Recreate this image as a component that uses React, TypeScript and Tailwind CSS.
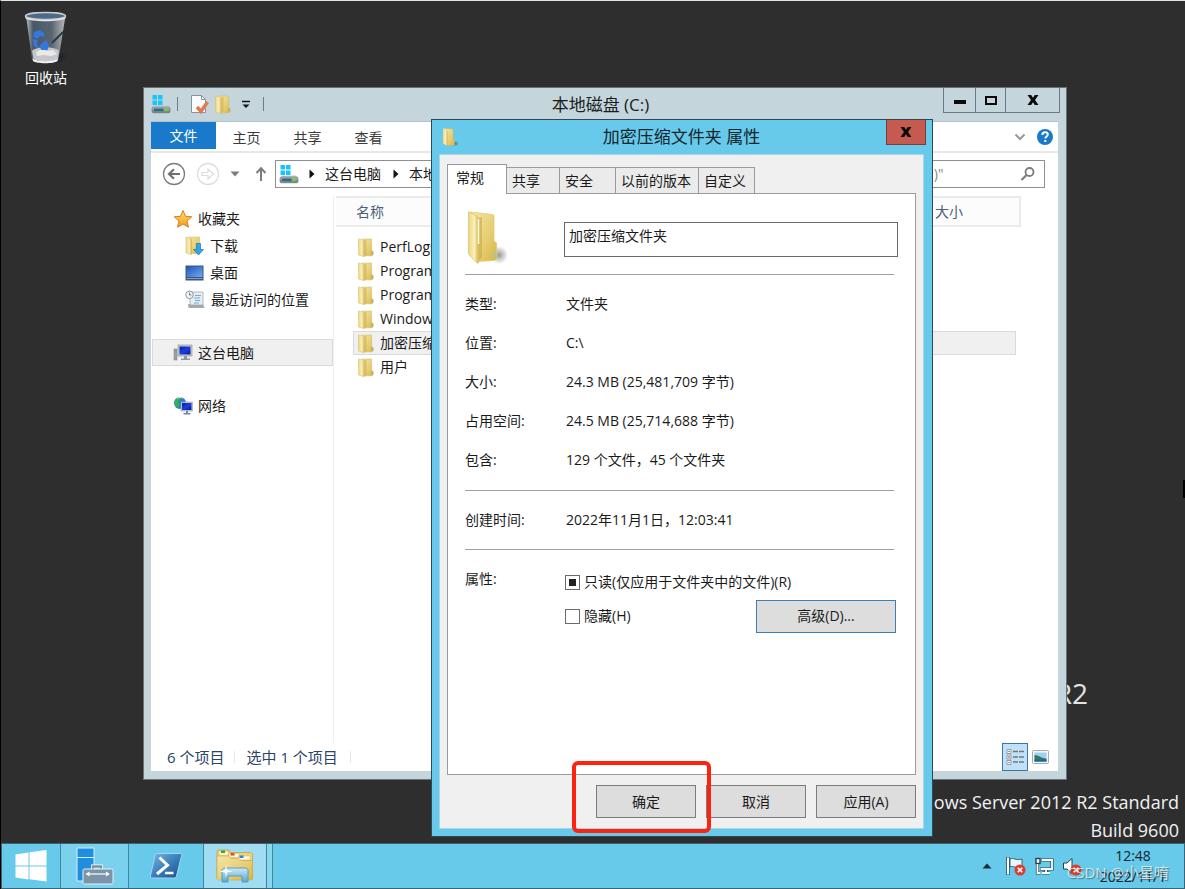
import { useState } from 'react';
import type { ReactNode } from 'react';

const places = [
  { label: '下载', icon: <DownloadsIcon /> },
  { label: '桌面', icon: <DesktopIcon /> },
  { label: '最近访问的位置', icon: <RecentIcon /> },
];

const files = ['PerfLogs', 'Program Files', 'Program Files (x86)', 'Windows', '加密压缩文件夹', '用户'];

const tabs = [
  { label: '常规', width: 'w-[60px]' },
  { label: '共享', width: 'w-[53px]' },
  { label: '安全', width: 'w-[56px]' },
  { label: '以前的版本', width: 'w-[83px]' },
  { label: '自定义', width: 'w-[56px]' },
];

const details = [
  { label: '类型:', value: '文件夹' },
  { label: '位置:', value: 'C:\\' },
  { label: '大小:', value: '24.3 MB (25,481,709 字节)' },
  { label: '占用空间:', value: '24.5 MB (25,714,688 字节)' },
  { label: '包含:', value: '129 个文件，45 个文件夹' },
];

/* ---------- Icons ---------- */

function SvgDefs() {
  return (
    <svg width="0" height="0" className="absolute" aria-hidden="true">
      <defs>
        <linearGradient id="folderFront" x1="0" y1="0" x2="1" y2="0">
          <stop offset="0" stopColor="#ecd687" />
          <stop offset="0.6" stopColor="#faf0b8" />
          <stop offset="1" stopColor="#d3b256" />
        </linearGradient>
        <linearGradient id="folderBack" x1="0" y1="0" x2="1" y2="1">
          <stop offset="0" stopColor="#f3e6a3" />
          <stop offset="0.6" stopColor="#e6cd72" />
          <stop offset="1" stopColor="#d9b440" />
        </linearGradient>
        <linearGradient id="screen" x1="0" y1="0" x2="1" y2="1">
          <stop offset="0" stopColor="#0a17a8" />
          <stop offset="0.5" stopColor="#1c3fe0" />
          <stop offset="1" stopColor="#0a1a8c" />
        </linearGradient>
        <linearGradient id="deskBlue" x1="0" y1="0" x2="1" y2="1">
          <stop offset="0" stopColor="#2458b4" />
          <stop offset="1" stopColor="#6fa8f2" />
        </linearGradient>
        <linearGradient id="driveBody" x1="0" y1="0" x2="0" y2="1">
          <stop offset="0" stopColor="#b5bcc0" />
          <stop offset="1" stopColor="#6f777c" />
        </linearGradient>
        <linearGradient id="psBody" x1="0" y1="0" x2="1" y2="1">
          <stop offset="0" stopColor="#7db6e2" />
          <stop offset="0.5" stopColor="#3a80bf" />
          <stop offset="1" stopColor="#1c4c86" />
        </linearGradient>
        <linearGradient id="binGlass" x1="0" y1="0" x2="1" y2="0">
          <stop offset="0" stopColor="#c3ccd2" />
          <stop offset="0.18" stopColor="#4d5d6c" />
          <stop offset="0.65" stopColor="#5c6b78" />
          <stop offset="0.8" stopColor="#8d959b" />
          <stop offset="1" stopColor="#c2c7ca" />
        </linearGradient>
        <linearGradient id="star" x1="0" y1="0" x2="0" y2="1">
          <stop offset="0" stopColor="#ffe36a" />
          <stop offset="1" stopColor="#f29a1e" />
        </linearGradient>
        <linearGradient id="glassHolder" x1="0" y1="0" x2="0" y2="1">
          <stop offset="0" stopColor="#c8e9f8" />
          <stop offset="1" stopColor="#5aa6d2" />
        </linearGradient>
        <radialGradient id="shade">
          <stop offset="0" stopColor="#000" stopOpacity="0.4" />
          <stop offset="1" stopColor="#000" stopOpacity="0" />
        </radialGradient>
      </defs>
    </svg>
  );
}

function FolderIcon({ className = 'w-4 h-[19px]' }: { className?: string }) {
  return (
    <svg viewBox="0 0 16 19" className={`shrink-0 ${className}`} aria-hidden="true">
      <path d="M4 1h9.600v11.500l1.600.8v3.700l-1.400.8L4 18z" fill="url(#folderBack)" stroke="#d4b65c" strokeWidth="0.5" />
      <path d="M6.500 2.500 8.500 1.500v15l-2.200 1.500z" fill="#cfae55" opacity="0.600" />
      <path d="M.5 1 5.500 2.200c.5.200.8.6.8 1.100v15.200L.9 17.200C.6 17.100.5 16.900.5 16.600z" fill="url(#folderFront)" stroke="#d9bd66" strokeWidth="0.5" />
      <path d="M14 13.500v2.600" stroke="#5fa8bd" strokeWidth="0.8" />
    </svg>
  );
}

function LargeFolderIcon() {
  return (
    <svg viewBox="0 0 42 56" className="w-[42px] h-14" aria-hidden="true">
      <ellipse cx="32" cy="45" rx="9" ry="9" fill="url(#shade)" />
      <path d="M4 2 25.500 4.500c1 .1 1.500.7 1.500 1.600V31l2.600 2v16l-3 1.500-15.600 1z" fill="url(#folderBack)" stroke="#e0c870" strokeWidth="0.700" />
      <path d="M12 8 15 7v40l-4 4z" fill="#c9a748" opacity="0.600" />
      <path d="M1.500 1.500 10 6.500c1 .7 1.500 1.400 1.500 2.500V52.500c0 .8-.7 1-1.300.6L2.700 45.500C1.900 44.800 1.500 44 1.500 43z" fill="url(#folderFront)" stroke="#dcc063" strokeWidth="0.700" />
      <path d="M11.500 9v25" stroke="#fffbe0" strokeWidth="1.500" />
      <path d="M27 42v6" stroke="#8ccbd8" strokeWidth="1.500" />
    </svg>
  );
}

function TinyFolderIcon() {
  return (
    <svg viewBox="0 0 17 20" className="w-[17px] h-5" aria-hidden="true">
      <ellipse cx="13" cy="16.500" rx="4" ry="3" fill="url(#shade)" />
      <path d="M2 1.500 11 2v10l1.500 1v5l-7 .5z" fill="url(#folderBack)" stroke="#d9b95a" strokeWidth="0.400" />
      <path d="M1 1 5.500 4v15L1 16.500z" fill="url(#folderFront)" />
    </svg>
  );
}

function DriveIcon() {
  return (
    <svg viewBox="0 0 20 20" className="w-5 h-5 shrink-0" aria-hidden="true">
      <path d="M1.500 1h4.500v4.500H1.500zM7 1h4.500v4.500H7zM1.500 6.500h4.500v4.500H1.500zM7 6.500h4.500v4.500H7z" fill="#15c5fb" />
      <path d="M3 11.500h14l2 2.300H1z" fill="#c6ccd0" />
      <rect x="1" y="13" width="18" height="5.800" rx="1.500" fill="url(#driveBody)" stroke="#687177" strokeWidth="0.600" />
      <rect x="3" y="14.500" width="9.500" height="2.600" fill="#2c6c86" />
      <rect x="13.500" y="14.500" width="3" height="2.600" fill="#5ee21e" />
    </svg>
  );
}

function PageCheckIcon() {
  return (
    <svg viewBox="0 0 19 20" className="w-[19px] h-5" aria-hidden="true">
      <path d="M1.500 1.500h10l4 4v13h-14z" fill="#fbfcfd" stroke="#8b9297" />
      <path d="M11.500 1.500v4h4" fill="none" stroke="#8b9297" />
      <path d="m7 13 4 4.500L17.500 8" fill="none" stroke="#e27a50" strokeWidth="3.500" />
    </svg>
  );
}

function StarIcon() {
  return (
    <svg viewBox="0 0 20 20" className="w-5 h-5 shrink-0" aria-hidden="true">
      <path d="m10 1.500 2.500 5.800 6.300.5-4.800 4.200 1.500 6.200L10 15l-5.500 3.200L6 12 1.200 7.800l6.300-.5z" fill="url(#star)" stroke="#d97b21" strokeWidth="1" strokeLinejoin="round" />
    </svg>
  );
}

function DownloadsIcon() {
  return (
    <svg viewBox="0 0 19 20" className="w-[19px] h-5 shrink-0" aria-hidden="true">
      <path d="M4 1h10.500v16.500H5z" fill="url(#folderBack)" stroke="#d4b65c" strokeWidth="0.500" />
      <path d="M1 1 6.500 3v15.500L1 17z" fill="url(#folderFront)" stroke="#d5b558" strokeWidth="0.500" />
      <path d="M11.500 7.500h4v6h3L13.500 19 8.500 13.500h3z" fill="#31a7ea" stroke="#1673b4" strokeWidth="0.700" />
    </svg>
  );
}

function DesktopIcon() {
  return (
    <svg viewBox="0 0 19 16" className="w-[19px] h-4 shrink-0" aria-hidden="true">
      <rect x="0.500" y="0.500" width="18" height="15" fill="#3a5584" />
      <rect x="1.500" y="1.500" width="16" height="10.500" fill="url(#deskBlue)" />
      <path d="M1.500 13.500h16" stroke="#8d9aaf" strokeWidth="1" />
    </svg>
  );
}

function RecentIcon() {
  return (
    <svg viewBox="0 0 20 19" className="w-5 h-[19px] shrink-0" aria-hidden="true">
      <path d="M3 14h15l1.500 4h-16z" fill="#a4aaaf" />
      <path d="M5 2h13v13H5z" fill="#e7edf1" stroke="#9aa3a9" strokeWidth="0.700" />
      <path d="M10 5.500h6M9 8h6M10 10.500h5M9 13h5" stroke="#6badd8" strokeWidth="1.200" />
      <circle cx="4.500" cy="4.800" r="3.800" fill="#eef2f4" stroke="#929a9f" strokeWidth="1" />
      <path d="M4.500 2.500v2.500h2" fill="none" stroke="#6d7479" strokeWidth="0.900" />
    </svg>
  );
}

function ComputerIcon() {
  return (
    <svg viewBox="0 0 20 18" className="w-5 h-[18px] shrink-0" aria-hidden="true">
      <rect x="1" y="5" width="3" height="11" fill="#9ba3a7" stroke="#747c80" strokeWidth="0.500" />
      <path d="M1.800 7h1.400" stroke="#57b53f" />
      <rect x="5" y="1" width="14" height="11" fill="#c9ced1" stroke="#858d92" strokeWidth="0.600" />
      <rect x="6.500" y="2.500" width="11" height="8" fill="url(#screen)" />
      <path d="M11 12h3v2.500h3v1.500H8v-1.500h3z" fill="#8f979b" />
    </svg>
  );
}

function NetworkIcon() {
  return (
    <svg viewBox="0 0 20 19" className="w-5 h-[19px] shrink-0" aria-hidden="true">
      <circle cx="7" cy="7" r="6" fill="#2b7fd6" />
      <path d="M3 3c2-2 5-2.500 6-1.500L7 4 5 5.500 6.500 8 5 12C2 10.500 1 8 1.200 6z" fill="#35b34a" />
      <path d="M4 2.500c2-1.300 4-1.500 6-.5" stroke="#d5f0fb" fill="none" />
      <rect x="8" y="6" width="11.500" height="9" fill="#c3c9cd" stroke="#8a9297" strokeWidth="0.500" />
      <rect x="9" y="7" width="9.500" height="7" fill="url(#screen)" />
      <path d="M13 15h2v2h2.500v1.500h-7V17H13z" fill="#6e86a5" />
    </svg>
  );
}

function RecycleBinIcon() {
  return (
    <svg viewBox="0 0 46 54" className="w-[46px] h-[54px]" aria-hidden="true">
      <ellipse cx="33" cy="46" rx="12" ry="7" fill="url(#shade)" />
      <path d="M3 5 9 48c.3 4 25 4.500 26.500 0L42.500 5z" fill="url(#binGlass)" opacity="0.9" />
      <path d="m29 32 11-11" stroke="#2f3942" strokeWidth="2" />
      <path d="M9 40c4-5 23-5 27 0l-1.500 8c-3 3-21 3-24 0z" fill="#c4c7c9" />
      <path d="m13 41 6-3 5 2 6-1 4 4-6 2-8-1-6 1z" fill="#e9e9e9" />
      <path d="M9.500 47.500c4 3.500 21.500 3.500 25.500 0l-.5 2.500c-3 3-21.500 3-24.500 0z" fill="#eff0f1" />
      <path d="m11 21 6-2 4 3 .5 4-4.500-1-2 3-5-2zM9.500 28l5 1-.5 4 2 4-4.500-1zM18 33l5-4 3 5-1.500 5h-6l-2-3z" fill="#3478de" />
      <ellipse cx="22.500" cy="5" rx="20" ry="3.500" fill="#4a6a86" stroke="#c9cdd0" strokeWidth="1.500" />
      <path d="M2.500 5.500c3 4.600 37 4.600 40 0v1.700c-4 4-36 4-40 0z" fill="#e3e5e6" />
    </svg>
  );
}

function ServerManagerIcon() {
  return (
    <svg viewBox="0 0 38 38" className="w-[38px] h-[38px]" aria-hidden="true">
      <path d="M1 1h17v33H1z" fill="#1f8edf" stroke="#d5eefa" strokeWidth="1" />
      <path d="M1 10.500h17" stroke="#d5eefa" strokeWidth="1" />
      <path d="M17 23v-3.500h8V23" fill="none" stroke="#fff" strokeWidth="4" />
      <path d="M17 23v-3.500h8V23" fill="none" stroke="#7b92a5" strokeWidth="2.500" />
      <rect x="7" y="22" width="30" height="15" rx="1.500" fill="#7b94a7" stroke="#e3f3fb" strokeWidth="1" />
      <path d="M11 27h21" stroke="#fff" strokeWidth="1.200" />
      <path d="m9.500 27 4-2.500v5zM34 27l-4-2.500v5z" fill="#fff" />
    </svg>
  );
}

function PowerShellIcon() {
  return (
    <svg viewBox="0 0 34 28" className="w-[34px] h-7" aria-hidden="true">
      <path d="M8.500 1.500h22.500c1.300 0 1.900.8 1.600 2L27.500 24c-.3 1.300-1.200 2-2.500 2H3c-1.300 0-1.900-.8-1.600-2L6 3.500c.3-1.300 1.200-2 2.500-2z" fill="url(#psBody)" stroke="#a9d3ee" strokeWidth="1" />
      <path d="m10.500 5.500 8 7.700-10.500 8.800" fill="none" stroke="#fff" strokeWidth="3" />
      <path d="M16 21h8.500" stroke="#fff" strokeWidth="2.500" />
    </svg>
  );
}

function ExplorerIcon() {
  return (
    <svg viewBox="0 0 40 36" className="w-10 h-9" aria-hidden="true">
      <path d="M2 3.500C2 2.700 2.500 2 3.500 2H14l1.500 2.500h20.500l1.500 1.500v24H2z" fill="#ecd07a" stroke="#c9a14a" strokeWidth="0.800" />
      <path d="M4 3.200h9v4H4zM14 5.500h10v4H14zM23 8h12v4H23z" fill="#fdf9e6" stroke="#d9b95c" strokeWidth="0.500" />
      <path d="M6 2.500h4v2.600H6z" fill="#22b52c" />
      <path d="M15.500 5h4v2.600h-4z" fill="#d9542b" />
      <path d="M24.500 7.500h4V10h-4z" fill="#1f8be0" />
      <path d="M2 8h12l2 2.500h8l2 2h11.500V30.500c0 1-.5 1.500-1.500 1.500h-32.500c-1 0-1.500-.5-1.500-1.500z" fill="url(#folderBack)" stroke="#cfa43e" strokeWidth="0.600" />
      <path d="M7 23c0-2 1-3 3-3h20c2 0 3 1 3 3v11h-6v-6H13v6H7z" fill="url(#glassHolder)" stroke="#4f98c4" strokeWidth="0.900" />
      <path d="m11 16 1 6 6 1.500-6 1L11 30l-1-5.500-6-1 6-1.500z" fill="#fff" opacity="0.900" />
    </svg>
  );
}

function ErrorBadge() {
  return (
    <g>
      <circle cx="14" cy="14" r="5.500" fill="#dd3b2c" />
      <path d="m11.700 11.700 4.600 4.600M16.300 11.700l-4.600 4.600" stroke="#fff" strokeWidth="1.600" />
    </g>
  );
}

function CloseGlyph() {
  return (
    <svg viewBox="0 0 12 10" className="w-3 h-2.5" aria-hidden="true">
      <path d="M.5 0h3.700L6 2.800 7.800 0h3.700L8 4.900 11.500 10H7.800L6 7.200 4.200 10H.5L4 4.900z" fill="#0b0b0b" />
    </svg>
  );
}

/* ---------- Explorer window ---------- */

function SideItem({ icon, label, indent, active }: { icon: ReactNode; label: string; indent?: boolean; active?: boolean }) {
  return (
    <a
      href="#"
      className={`flex items-center h-[27px] border ${indent ? 'pl-8 gap-1.5' : 'pl-5 gap-[5px]'} ${
        active ? 'bg-[#f0f0f0] border-[#dadada]' : 'border-transparent'
      }`}
    >
      {icon}
      <span className="whitespace-nowrap">{label}</span>
    </a>
  );
}

function ExplorerWindow() {
  return (
    <section
      aria-label="本地磁盘 (C:)"
      className="absolute left-[142px] right-[118px] top-[86px] bottom-[63px] flex flex-col bg-[#c4d6dc] border border-[#66747a] pl-[7px] pr-2 pb-2"
    >
      {/* Title bar */}
      <header className="flex items-start h-[33px] shrink-0">
        <div className="flex items-center h-8 w-[117px] shrink-0">
          <DriveIcon />
          <span className="w-px h-3.5 ml-1.5 mr-3 bg-[#6f7c82]" />
          <PageCheckIcon />
          <FolderIcon className="w-4 h-[19px] ml-1.5 mr-2.5" />
          <svg viewBox="0 0 10 9" className="w-2.5 h-[9px] shrink-0" aria-hidden="true">
            <path d="M1 1.500h8" stroke="#111" strokeWidth="1.500" />
            <path d="M1.500 4.500h7L5 8z" fill="#111" />
          </svg>
          <span className="w-px h-3.5 ml-3 shrink-0 bg-[#6f7c82]" />
        </div>
        <h1 className="flex-1 pr-2.5 text-center text-[17px] leading-[33px] text-[#1c1c1c]">本地磁盘 (C:)</h1>
        <div className="flex h-[25px] -mr-0.5 border border-t-0 border-[#6c7a82]">
          <button aria-label="最小化" className="flex items-center justify-center w-8 border-r border-[#6c7a82]">
            <span className="w-3 h-1 mt-1 bg-[#0b0b0b]" />
          </button>
          <button aria-label="最大化" className="flex items-center justify-center w-[30px] border-r border-[#6c7a82]">
            <span className="w-3 h-[9px] border-2 border-[#0b0b0b]" />
          </button>
          <button aria-label="关闭" className="flex items-center justify-center w-[53px]">
            <CloseGlyph />
          </button>
        </div>
      </header>

      <div className="flex flex-col flex-1 min-h-0 bg-white border-t border-[#b3c3c9]">
        {/* Ribbon tabs */}
        <div className="flex h-[31px] shrink-0 border-b-2 border-[#e8e8e8] text-[#3b3b3b]">
          <button className="w-[65px] h-[27px] bg-[#1979ca] text-white">文件</button>
          <button className="w-[61px] pt-0.5">主页</button>
          <button className="w-[61px] pt-0.5">共享</button>
          <button className="w-[61px] pt-0.5">查看</button>
          <div className="flex items-center ml-auto pr-1 gap-2.5">
            <button aria-label="展开功能区">
              <svg viewBox="0 0 12 8" className="w-3 h-2" aria-hidden="true">
                <path d="m1.500 1.500 4.500 4.500 4.500-4.500" fill="none" stroke="#999" strokeWidth="2" />
              </svg>
            </button>
            <button aria-label="帮助">
              <svg viewBox="0 0 18 18" className="w-[18px] h-[18px]" aria-hidden="true">
                <circle cx="9" cy="9" r="8" fill="#1979ca" />
                <path d="M6.300 7c0-1.700 1.200-2.700 2.800-2.700s2.700.9 2.700 2.300c0 2-2.500 1.900-2.500 3.900M9.300 12v2" fill="none" stroke="#fff" strokeWidth="1.900" />
              </svg>
            </button>
          </div>
        </div>

        {/* Address row */}
        <div className="flex items-center h-[42px] shrink-0 pl-[11px] pr-[13px]">
          <button aria-label="后退">
            <svg viewBox="0 0 24 24" className="w-6 h-6" aria-hidden="true">
              <circle cx="12" cy="12" r="10.500" fill="none" stroke="#7d7d7d" strokeWidth="1.300" />
              <path d="M18 12H7.500M12 7.200 7 12l5 4.800" fill="none" stroke="#707070" strokeWidth="2.200" />
            </svg>
          </button>
          <button aria-label="前进" className="ml-2.5">
            <svg viewBox="0 0 24 24" className="w-6 h-6" aria-hidden="true">
              <circle cx="12" cy="12" r="10.500" fill="none" stroke="#dedede" strokeWidth="1.300" />
              <path d="M6 10.500h6V7l5.500 5-5.500 5v-3.500H6z" fill="none" stroke="#dcdcdc" strokeWidth="1.200" />
            </svg>
          </button>
          <button aria-label="最近的位置" className="ml-2.5">
            <svg viewBox="0 0 10 6" className="w-2.5 h-1.5" aria-hidden="true">
              <path d="M.5.5h9L5 5.500z" fill="#7c7c7c" />
            </svg>
          </button>
          <button aria-label="上移" className="ml-[15px]">
            <svg viewBox="0 0 12 16" className="w-3 h-4" aria-hidden="true">
              <path d="M6 15V2.500M1.500 7 6 2.300 10.500 7" fill="none" stroke="#7c7c7c" strokeWidth="2" />
            </svg>
          </button>
          <nav aria-label="地址" className="flex items-center flex-1 h-7 ml-2 px-[3px] border border-[#8f8f8f]">
            <DriveIcon />
            <svg viewBox="0 0 6 10" className="w-1.5 h-2.5 mx-2.5" aria-hidden="true">
              <path d="M.5.5v9L5.500 5z" fill="#111" />
            </svg>
            <a href="#" className="whitespace-nowrap">这台电脑</a>
            <svg viewBox="0 0 6 10" className="w-1.5 h-2.5 ml-3 mr-2.5" aria-hidden="true">
              <path d="M.5.5v9L5.500 5z" fill="#111" />
            </svg>
            <a href="#" className="whitespace-nowrap">本地磁盘 (C:)</a>
          </nav>
          <div className="flex items-center w-[232px] h-7 ml-2 pl-2.5 pr-2 border border-[#8f8f8f]">
            <input
              aria-label="搜索"
              placeholder={'搜索"本地磁盘 (C:)"'}
              className="flex-1 min-w-0 outline-none placeholder:text-[#8a8a8a]"
            />
            <svg viewBox="0 0 16 16" className="w-4 h-4" aria-hidden="true">
              <circle cx="9.500" cy="6" r="4" fill="none" stroke="#7c7c7c" strokeWidth="1.800" />
              <path d="m6.500 9-5 5" stroke="#7c7c7c" strokeWidth="2.200" />
            </svg>
          </div>
        </div>

        <div className="flex flex-1 min-h-0 pt-px">
          {/* Navigation pane */}
          <nav aria-label="导航窗格" className="w-[183px] shrink-0 pt-[9px] pl-px border-r border-[#f0f0f0]">
            <div className="w-[181px]">
              <SideItem icon={<StarIcon />} label="收藏夹" />
              {places.map((place) => (
                <SideItem key={place.label} icon={place.icon} label={place.label} indent />
              ))}
              <div className="mt-[26px]">
                <SideItem icon={<ComputerIcon />} label="这台电脑" active />
              </div>
              <div className="mt-[26px]">
                <SideItem icon={<NetworkIcon />} label="网络" />
              </div>
            </div>
          </nav>

          {/* File list */}
          <div className="flex-1 pl-0.5 pr-[37px]">
            <table className="w-full table-fixed border-separate border-spacing-0 text-left">
              <thead>
                <tr className="h-[31px] text-[#4c607a] [&>th]:font-normal [&>th]:border-y-2 [&>th]:border-[#ebebeb] [&>th]:bg-[#fcfcfc]">
                  <th className="w-[17px]" />
                  <th className="w-[240px] pl-[3px]">名称</th>
                  <th className="w-[150px]">修改日期</th>
                  <th>类型</th>
                  <th className="w-[81px]">大小</th>
                  <th className="w-[5px] border-r-2" />
                </tr>
              </thead>
              <tbody>
                <tr className="h-2" />
                {files.map((name) => (
                  <tr
                    key={name}
                    className={`h-6 ${
                      name === '加密压缩文件夹'
                        ? '[&>td]:bg-[#f0f0f0] [&>td]:border-y [&>td]:border-[#dadada] [&>td:nth-child(2)]:border-l [&>td:nth-child(5)]:border-r'
                        : '[&>td:nth-child(2)]:pl-px'
                    }`}
                  >
                    <th className="p-0" />
                    <td className="p-0">
                      <div className="flex items-center h-[22px] pl-1 gap-1.5 leading-[22px]">
                        <FolderIcon />
                        <span className="whitespace-nowrap">{name}</span>
                      </div>
                    </td>
                    <td className="p-0" />
                    <td className="p-0" />
                    <td className="p-0" />
                  </tr>
                ))}
              </tbody>
            </table>
          </div>
        </div>

        {/* Status bar */}
        <footer className="flex items-center h-7 shrink-0 pl-4 pr-[9px] text-[15px] text-[#2c4468]">
          <span>6 个项目</span>
          <span className="w-px h-3 ml-2.5 mr-[11px] bg-[#e8e8e8]" />
          <span>选中 1 个项目</span>
          <span className="w-px h-3 ml-3 bg-[#e8e8e8]" />
          <div className="flex items-center ml-auto gap-1">
            <button aria-label="详细信息" className="flex items-center justify-center w-[26px] h-7 bg-[#c2e1f6] border border-[#3878a4]">
              <svg viewBox="0 0 20 18" className="w-5 h-[18px]" aria-hidden="true">
                <path d="M2 1.500h4v4H2zM2 7h4v4H2zM2 12.500h4v4H2z" fill="#fff" stroke="#8494a2" strokeWidth="0.900" />
                <path d="M3.300 9h1.500" stroke="#e23a2e" strokeWidth="1.500" />
                <path d="M3.300 3.500h1.500M3.300 14.500h1.500" stroke="#5f7f4f" strokeWidth="1.200" />
                <path d="M8 3.500h5M14 3.500h5M8 9h5M14 9h5M8 14h5M14 14h5" stroke="#6b7a86" strokeWidth="1.300" />
              </svg>
            </button>
            <button aria-label="大图标">
              <svg viewBox="0 0 17 14" className="w-[17px] h-3.5" aria-hidden="true">
                <rect x="0.500" y="0.500" width="16" height="13" rx="1" fill="#f4f6f8" stroke="#a3adb8" />
                <rect x="2.500" y="2.500" width="12" height="9" fill="#9fd0f2" />
                <path d="M2.500 5c4 0 6 3 12 3.500v3h-12z" fill="#2d7d5b" />
                <path d="M2.500 9.500h12v2h-12z" fill="#2a5fb0" />
              </svg>
            </button>
          </div>
        </footer>
      </div>
    </section>
  );
}

/* ---------- Properties dialog ---------- */

function DialogButton({ children }: { children: ReactNode }) {
  return <button className="w-[100px] h-[33px] bg-[#dddddd] border border-[#7c7c7c]">{children}</button>;
}

function PropertiesDialog() {
  const [folderName, setFolderName] = useState('加密压缩文件夹');
  const [tab, setTab] = useState('常规');

  return (
    <section
      role="dialog"
      aria-label="加密压缩文件夹 属性"
      className="absolute left-[430px] top-[118px] w-[502px] bg-[#67caea] border border-[#2d4a57] pl-[7px] pr-2 pb-[7px]"
    >
      <header className="flex items-start h-[34px]">
        <div className="flex items-center w-10 h-[34px] pl-[3px]">
          <TinyFolderIcon />
        </div>
        <h2 className="flex-1 pr-0.5 text-center text-[17px] leading-[34px] text-[#14242c]">加密压缩文件夹 属性</h2>
        <button
          aria-label="关闭"
          className="flex items-center justify-center w-10 h-[25px] -mr-0.5 bg-[#c45a50] border border-t-0 border-[#7c3a3a]"
        >
          <CloseGlyph />
        </button>
      </header>

      <div className="bg-[#f0f0f0] border border-[#a9d5e4] px-[7px] pt-[9px] pb-2.5">
        {/* Tabs */}
        <div role="tablist" className="flex items-end">
          {tabs.map(({ label, width }) => (
            <button
              key={label}
              role="tab"
              aria-selected={tab === label}
              onClick={() => setTab(label)}
              className={`${width} text-left whitespace-nowrap border ${
                tab === label
                  ? 'relative z-10 h-[30px] -mb-px pl-2 pb-1 bg-white border-[#9a9aa2] border-b-0'
                  : 'h-[26px] pl-[5px] bg-[#ebebeb] border-[#9a9aa2] border-l-0 border-b-0'
              }`}
            >
              {label}
            </button>
          ))}
        </div>

        {/* General page */}
        <div role="tabpanel" className="h-[582px] bg-white border border-[#9a9aa2] pl-[17px] pr-[21px]">
          <div className="flex items-start h-[81px] pt-4 pl-0.5 border-b border-[#a0a0a0]">
            <LargeFolderIcon />
            <input
              aria-label="名称"
              value={folderName}
              onChange={(e) => setFolderName(e.target.value)}
              className="flex-1 h-[35px] mt-3 ml-[55px] -mr-1 px-1 pb-2.5 bg-white border border-[#6a6a6a] outline-none"
            />
          </div>

          <dl className="h-[216px] pt-[9px] border-b border-[#a0a0a0]">
            {details.map((row) => (
              <div key={row.label} className="flex items-center h-[39px]">
                <dt className="w-[101px]">{row.label}</dt>
                <dd>{row.value}</dd>
              </div>
            ))}
          </dl>

          <dl className="flex items-center h-[59px] border-b border-[#a0a0a0]">
            <dt className="w-[101px]">创建时间:</dt>
            <dd>2022年11月1日，12:03:41</dd>
          </dl>

          <div className="flex pt-[19px]">
            <span className="w-[100px] leading-5">属性:</span>
            <div className="flex-1">
              <label className="flex items-center gap-1 h-[26px]">
                <input
                  type="checkbox"
                  ref={(el) => {
                    if (el) el.indeterminate = true;
                  }}
                  className="appearance-none w-[15px] h-[15px] border border-[#6a6a6a] bg-white indeterminate:bg-[linear-gradient(#222,#222)] bg-no-repeat bg-center bg-size-[7px_7px]"
                />
                只读(仅应用于文件夹中的文件)(R)
              </label>
              <div className="flex items-center justify-between h-[42px]">
                <label className="flex items-center gap-1">
                  <input
                    type="checkbox"
                    className="appearance-none w-[15px] h-[15px] border border-[#6a6a6a] bg-white checked:bg-[#222]"
                  />
                  隐藏(H)
                </label>
                <button className="w-[140px] h-[33px] -mr-0.5 bg-[#dddddd] border border-[#3d7fb5]">高级(D)...</button>
              </div>
            </div>
          </div>
        </div>

        <div className="flex justify-end gap-2.5 pt-2.5">
          <div className="relative">
            <DialogButton>确定</DialogButton>
            {/* Highlight round the OK button */}
            <span className="absolute z-10 -left-6 -top-6 w-[139px] h-[72px] border-4 border-[#fc2313] rounded-md pointer-events-none" />
          </div>
          <DialogButton>取消</DialogButton>
          <DialogButton>应用(A)</DialogButton>
        </div>
      </div>
    </section>
  );
}

/* ---------- Taskbar ---------- */

function Taskbar() {
  return (
    <footer className="flex h-[46px] shrink-0 bg-[#67caea] border border-[#3f6471] text-[#10242c]">
      <button aria-label="开始" className="flex items-center justify-center w-[59px] border-r border-[#43869c]">
        <svg viewBox="0 0 32 32" className="w-8 h-8" aria-hidden="true">
          <path d="m.5 4.500 13-2V15.500H.5zM14.500 2.300 31.500 0v15.500h-17zM.5 16.500h13v13l-13-2zM14.500 16.500h17V31.500l-17-2.200z" fill="#fff" />
        </svg>
      </button>
      <button aria-label="服务器管理器" className="flex items-center justify-center w-[68px] bg-[#79d1ed] border-r border-[#43869c]">
        <ServerManagerIcon />
      </button>
      <button aria-label="PowerShell" className="flex items-center justify-center w-[75px] border-r border-[#43869c]">
        <PowerShellIcon />
      </button>
      <button aria-label="文件资源管理器" className="flex items-center justify-center w-[63px] bg-[#a1ddf2] border-r border-[#43869c]">
        <ExplorerIcon />
      </button>
      <span className="w-[6px] bg-[#8ad6ef] border-r border-[#43869c]" />

      <div className="flex items-center ml-auto">
        <button aria-label="显示隐藏的图标" className="mr-3.5">
          <svg viewBox="0 0 10 6" className="w-2.5 h-1.5" aria-hidden="true">
            <path d="M.5 5.500h9L5 .5z" fill="#1b2b33" />
          </svg>
        </button>
        <svg viewBox="0 0 20 20" className="w-5 h-5 mr-2" aria-label="操作中心">
          <path d="M2 1v18" stroke="#24424e" strokeWidth="3.400" />
          <path d="M2 1.500v17" stroke="#fff" strokeWidth="2" />
          <path d="M4 3c4-2 5 2 12 0v8c-7 2-8-2-12 0z" fill="#e9f6fb" stroke="#24424e" strokeWidth="0.800" />
          <ErrorBadge />
        </svg>
        <svg viewBox="0 0 20 20" className="w-5 h-5 mr-2" aria-label="网络">
          <path d="M7 4h11v9H6M12 13v4M8 17h8M3.500 8v9h3" fill="none" stroke="#24424e" strokeWidth="3.200" />
          <rect x="2" y="2.500" width="4" height="5" fill="#fff" stroke="#24424e" strokeWidth="1.400" />
          <path d="M7.500 4H18v9H6.500M12 13v4M8 17h8M3.500 8v9h3" fill="none" stroke="#fff" strokeWidth="1.800" />
        </svg>
        <svg viewBox="0 0 20 20" className="w-5 h-5" aria-label="音量">
          <path d="M1.500 7h3.500l5-4.500v15L5 13H1.500z" fill="#fff" stroke="#24424e" strokeWidth="1" />
          <ErrorBadge />
        </svg>
        <time className="w-[102px] text-center leading-[21px]">
          <span className="block">12:48</span>
          <span className="block">2022/11/1</span>
        </time>
      </div>
    </footer>
  );
}

export default function App() {
  return (
    <div className="flex flex-col h-screen overflow-hidden bg-[#2e2e2e] border-t border-l border-t-[#dfe6e3] border-l-black font-['Open_Sans','Noto_Sans_CJK_SC',sans-serif] text-sm leading-5 text-[#1a1a1a] cursor-default">
      <SvgDefs />
      <main className="relative flex-1">
        <a href="#" className="flex flex-col items-center w-[90px] pt-2.5 text-white">
          <RecycleBinIcon />
          <span className="mt-[3px]">回收站</span>
        </a>

        <p className="absolute right-[97px] bottom-[132px] text-[28px] leading-9 text-[#e3e3e3]">
          Windows Server 2012 R2
        </p>
        <p className="absolute right-1.5 -bottom-px text-right text-lg leading-7 text-[#f2f2f2] whitespace-pre-line">
          {'Windows Server 2012 R2 Standard\nBuild 9600'}
        </p>

        <ExplorerWindow />
        <PropertiesDialog />
      </main>
      <Taskbar />

      <span className="absolute right-4 bottom-[7px] text-[15px] leading-5 text-white/70 [text-shadow:1px_1px_1px_rgba(60,60,60,0.6)]">
        CSDN @小星唷
      </span>
      {/* Edge of the pointer at the right side of the desktop */}
      <span className="absolute right-0 top-[480px] w-0.5 h-[18px] bg-black" />
    </div>
  );
}
